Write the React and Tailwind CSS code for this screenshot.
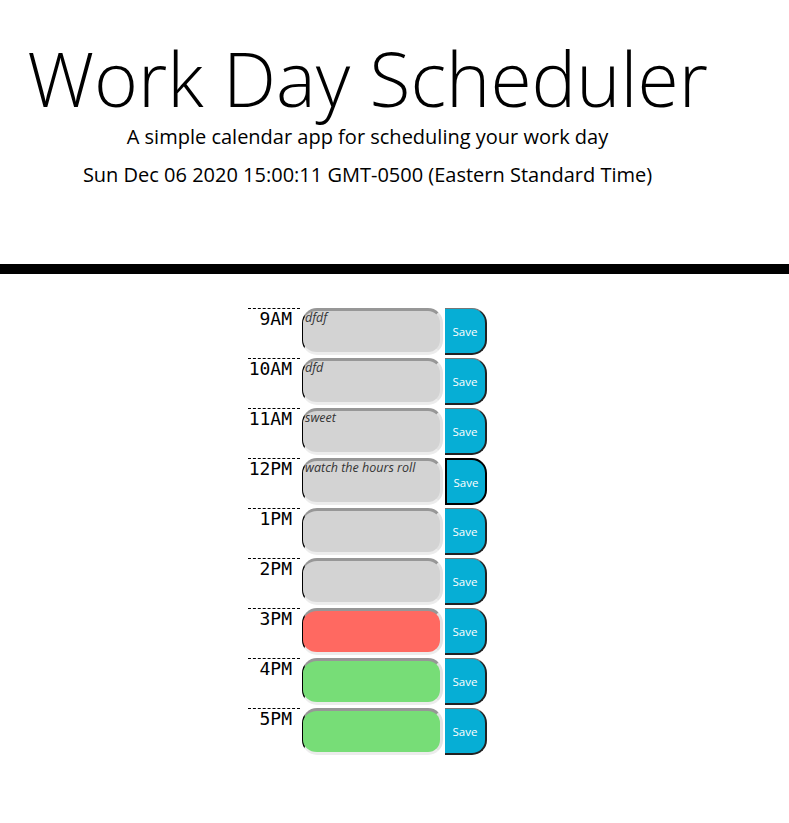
import React from "react";

const rows = [
  { h: "9AM", text: "dfdf", c: "past" },
  { h: "10AM", text: "dfd", c: "past" },
  { h: "11AM", text: "sweet", c: "past" },
  { h: "12PM", text: "watch the hours roll", c: "past", focus: true },
  { h: "1PM", text: "", c: "past" },
  { h: "2PM", text: "", c: "past" },
  { h: "3PM", text: "", c: "present" },
  { h: "4PM", text: "", c: "future" },
  { h: "5PM", text: "", c: "future" },
];

function Row({ r }) {
  const bg =
    r.c === "past" ? "bg-[#d3d3d3]" : r.c === "present" ? "bg-[#ff6961]" : "bg-[#77dd77]";
  return (
    <div className="flex h-[50px]">
      <div className="w-[52px] border-t border-dashed border-black text-right pr-[8px] text-[18px] leading-[20px] text-black font-['DejaVu_Sans_Mono',monospace]">
        {r.h}
      </div>
      <div
        className={`ml-[2px] w-[141px] h-[47px] rounded-[15px] ${bg} border-t-[3px] border-t-[#979797] border-l border-l-black border-r-[3px] border-r-[#e3e3e3] border-b-[3px] border-b-[#ececec] pl-[2px] text-[12.5px] leading-[14px] italic text-[#333] font-['Open_Sans',sans-serif]`}
      >
        {r.text}
      </div>
      <div
        className={`ml-[2px] w-[42px] h-[47px] rounded-r-[15px] bg-[#06aed5] flex items-center justify-center text-white text-[11.5px] font-['Open_Sans',sans-serif] ${
          r.focus
            ? "border-2 border-black"
            : "border-t border-t-[#767676] border-r-2 border-r-[#222] border-b-2 border-b-[#222]"
        }`}
      >
        <span className="pt-[2px]">Save</span>
      </div>
    </div>
  );
}

export default function App() {
  return (
    <div className="w-[789px] min-h-[823px] bg-white font-['Open_Sans',sans-serif] text-black">
      <div className="w-[735px] text-center pt-[33px] h-[264px]">
        <h1 className="text-[75px] leading-[90px] font-light">Work Day Scheduler</h1>
        <p className="text-[20px] leading-[28px]">
          A simple calendar app for scheduling your work day
        </p>
        <p className="text-[20px] leading-[30px] mt-[9px]">
          Sun Dec 06 2020 15:00:11 GMT-0500 (Eastern Standard Time)
        </p>
      </div>
      <div className="h-[10px] bg-black" />
      <div className="w-[735px] flex justify-center pt-[34px]">
        <div className="flex flex-col">
          {rows.map((r) => (
            <Row key={r.h} r={r} />
          ))}
        </div>
      </div>
    </div>
  );
}
